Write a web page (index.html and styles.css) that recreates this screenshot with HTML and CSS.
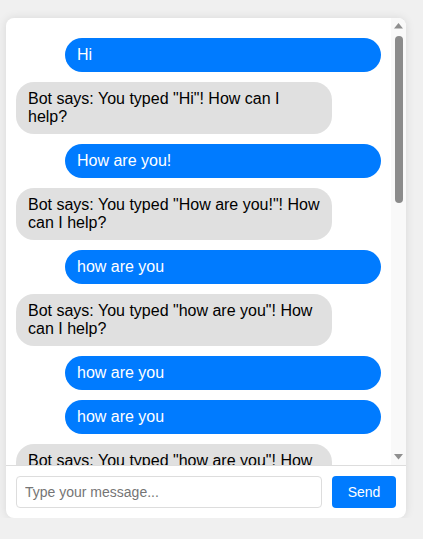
FILE: index.html
```html
<!DOCTYPE html>
<html lang="en">
<head>
<meta charset="utf-8">
<title>Chat</title>
<link rel="stylesheet" href="styles.css">
</head>
<body>
<div class="chat">
  <div class="body">
    <div class="messages">
      <div class="msg user">Hi</div>
      <div class="msg bot">Bot says: You typed "Hi"! How can I help?</div>
      <div class="msg user">How are you!</div>
      <div class="msg bot">Bot says: You typed "How are you!"! How can I help?</div>
      <div class="msg user">how are you</div>
      <div class="msg bot">Bot says: You typed "how are you"! How can I help?</div>
      <div class="msg user">how are you</div>
      <div class="msg user">how are you</div>
      <div class="msg bot">Bot says: You typed "how are you"! How can I help?</div>
      <div class="msg bot">Bot says: You typed "how are you"! How can I help?</div>
    </div>
    <div class="scrollbar">
      <svg class="arrow" width="15" height="15" viewBox="0 0 15 15"><path d="M3 10.5 L7.5 5 L12 10.5 Z" fill="#8f8f8f"/></svg>
      <div class="track"><div class="thumb"></div></div>
      <svg class="arrow" width="15" height="15" viewBox="0 0 15 15"><path d="M3 4 L12 4 L7.5 9.5 Z" fill="#8f8f8f"/></svg>
    </div>
  </div>
  <div class="input-area">
    <input class="text-input" type="text" placeholder="Type your message...">
    <button class="send">Send</button>
  </div>
</div>
</body>
</html>
```

FILE: styles.css
```css
html, body {
  margin: 0;
  padding: 0;
}
body {
  background: #f0f0f0;
  font-family: "Liberation Sans", Arial, sans-serif;
}
.chat {
  width: 400px;
  height: 500px;
  margin: 18px 0 0 6px;
  background: #fff;
  border-radius: 8px;
  box-shadow: 0 0 10px rgba(0, 0, 0, 0.1);
  display: flex;
  flex-direction: column;
  overflow: hidden;
}
.body {
  flex: 1;
  min-height: 0;
  display: flex;
}
.messages {
  flex: 1;
  min-width: 0;
  overflow: hidden;
  padding: 10px;
}
.scrollbar {
  width: 15px;
  flex: none;
  background: #f9f9f9;
  display: flex;
  flex-direction: column;
}
.arrow {
  display: block;
  flex: none;
}
.track {
  flex: 1;
  padding-top: 3px;
  display: flex;
  flex-direction: column;
  align-items: center;
}
.thumb {
  width: 8px;
  height: 167px;
  border-radius: 4px;
  background: #8b8b8b;
}
.msg {
  width: 80%;
  margin: 10px 0;
  padding: 8px 12px;
  font-size: 16px;
  line-height: 18px;
  border-radius: 18px;
}
.user {
  background: #007bff;
  color: #fff;
  margin-left: auto;
}
.bot {
  background: #e0e0e0;
  color: #000;
}
.input-area {
  display: flex;
  gap: 10px;
  padding: 10px;
  border-top: 1px solid #ddd;
}
.text-input {
  flex: 1;
  height: 32px;
  box-sizing: border-box;
  padding: 8px;
  border: 1px solid #ddd;
  border-radius: 4px;
  font-family: "Liberation Sans", Arial, sans-serif;
  font-size: 14px;
}
.text-input::placeholder {
  color: #757575;
}
.send {
  width: 64px;
  height: 32px;
  border: none;
  border-radius: 4px;
  background: #007bff;
  color: #fff;
  font-family: "Liberation Sans", Arial, sans-serif;
  font-size: 14px;
}
```
